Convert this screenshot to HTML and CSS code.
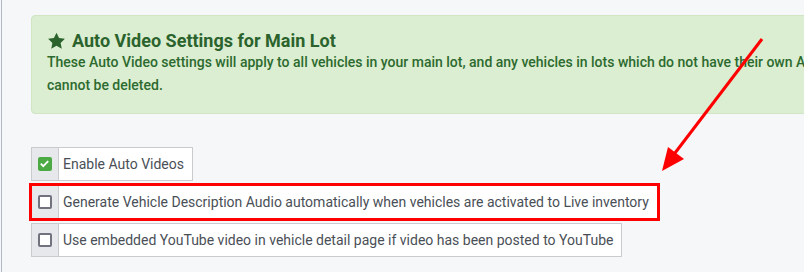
FILE: index.html
```html
<!DOCTYPE html>
<html lang="en">
<head>
    <meta charset="UTF-8">
    <title>Auto Video Settings</title>
    <link rel="stylesheet" href="styles.css">
</head>
<body>
    <div class="page">
        <div class="section">
            <div class="alert">
                <h4 class="alert-title">
                    <svg class="star" viewBox="0 0 24 24" width="19" height="18"><path d="M12 1l3.4 7.1 7.8 1-5.7 5.4 1.5 7.7L12 18.4l-7 3.8 1.5-7.7L.8 9.1l7.8-1z"/></svg>
                    Auto Video Settings for Main Lot
                </h4>
                <p class="alert-text">These Auto Video settings will apply to all vehicles in your main lot, and any vehicles in lots which do not have their own Auto Video settings. Main lot settings<br>cannot be deleted.</p>
            </div>

            <div class="check-row">
                <span class="addon"><span class="box checked"><svg viewBox="0 0 14 14" width="13" height="13"><path d="M3 7.2l2.6 2.6L11 4.4" fill="none" stroke="#fff" stroke-width="2"/></svg></span></span>
                <span class="label">Enable Auto Videos</span>
            </div>
            <div class="check-row highlight">
                <span class="addon"><span class="box"></span></span>
                <span class="label">Generate Vehicle Description Audio automatically when vehicles are activated to Live inventory</span>
            </div>
            <div class="check-row">
                <span class="addon"><span class="box"></span></span>
                <span class="label">Use embedded YouTube video in vehicle detail page if video has been posted to YouTube</span>
            </div>
        </div>
        <div class="divider"></div>
    </div>

    <svg class="arrow" width="804" height="272" viewBox="0 0 804 272">
        <line x1="762" y1="39" x2="675" y2="153" stroke="#f00" stroke-width="3"/>
        <polygon points="662,171 668,147 684,159" fill="#f00"/>
    </svg>
</body>
</html>
```

FILE: styles.css
```css
* {
    margin: 0;
    padding: 0;
    box-sizing: border-box;
}
body {
    background: #f6f7f9;
    font-family: Roboto, "Liberation Sans", sans-serif;
    width: 804px;
    height: 272px;
    overflow: hidden;
}
.page {
    margin-left: 1px;
    border-left: 1px solid #b4b8c6;
    padding: 15px 0 0 14px;
    height: 272px;
    width: 1200px;
}
.section {
    padding: 0 15px 14px 15px;
}
.alert {
    background: #dbeed1;
    border: 1px solid #cfe5c3;
    border-radius: 4px;
    padding: 15px 15px 16px 15px;
    margin-bottom: 33px;
    color: #2d6a2f;
}
.alert-title {
    font-size: 18px;
    line-height: 20px;
    font-weight: 700;
    color: #2b632d;
    display: flex;
    align-items: center;
    gap: 6px;
}
.star {
    fill: #2b632d;
}
.alert-text {
    font-size: 14px;
    line-height: 23px;
    font-weight: 500;
}
.check-row {
    display: flex;
    width: fit-content;
    height: 34px;
    border: 1px solid #c9cbcf;
    margin-bottom: 4px;
    background: #fff;
}
.addon {
    width: 27px;
    background: #e6e8ec;
    border-right: 1px solid #c9cbcf;
    display: flex;
    align-items: center;
    justify-content: center;
}
.box {
    width: 14px;
    height: 14px;
    border: 2px solid #72727f;
    border-radius: 2px;
    background: #fff;
    display: flex;
}
.box.checked {
    background: #4caa45;
    border: none;
}
.label {
    display: flex;
    align-items: center;
    padding: 0 8px 0 4px;
    font-size: 14px;
    color: #4a4f57;
}
.highlight {
    outline: 3px solid #f00;
    outline-offset: -1px;
}
.divider {
    border-top: 1px solid #cfd2d8;
}
.arrow {
    position: absolute;
    left: 0;
    top: 0;
}
```
